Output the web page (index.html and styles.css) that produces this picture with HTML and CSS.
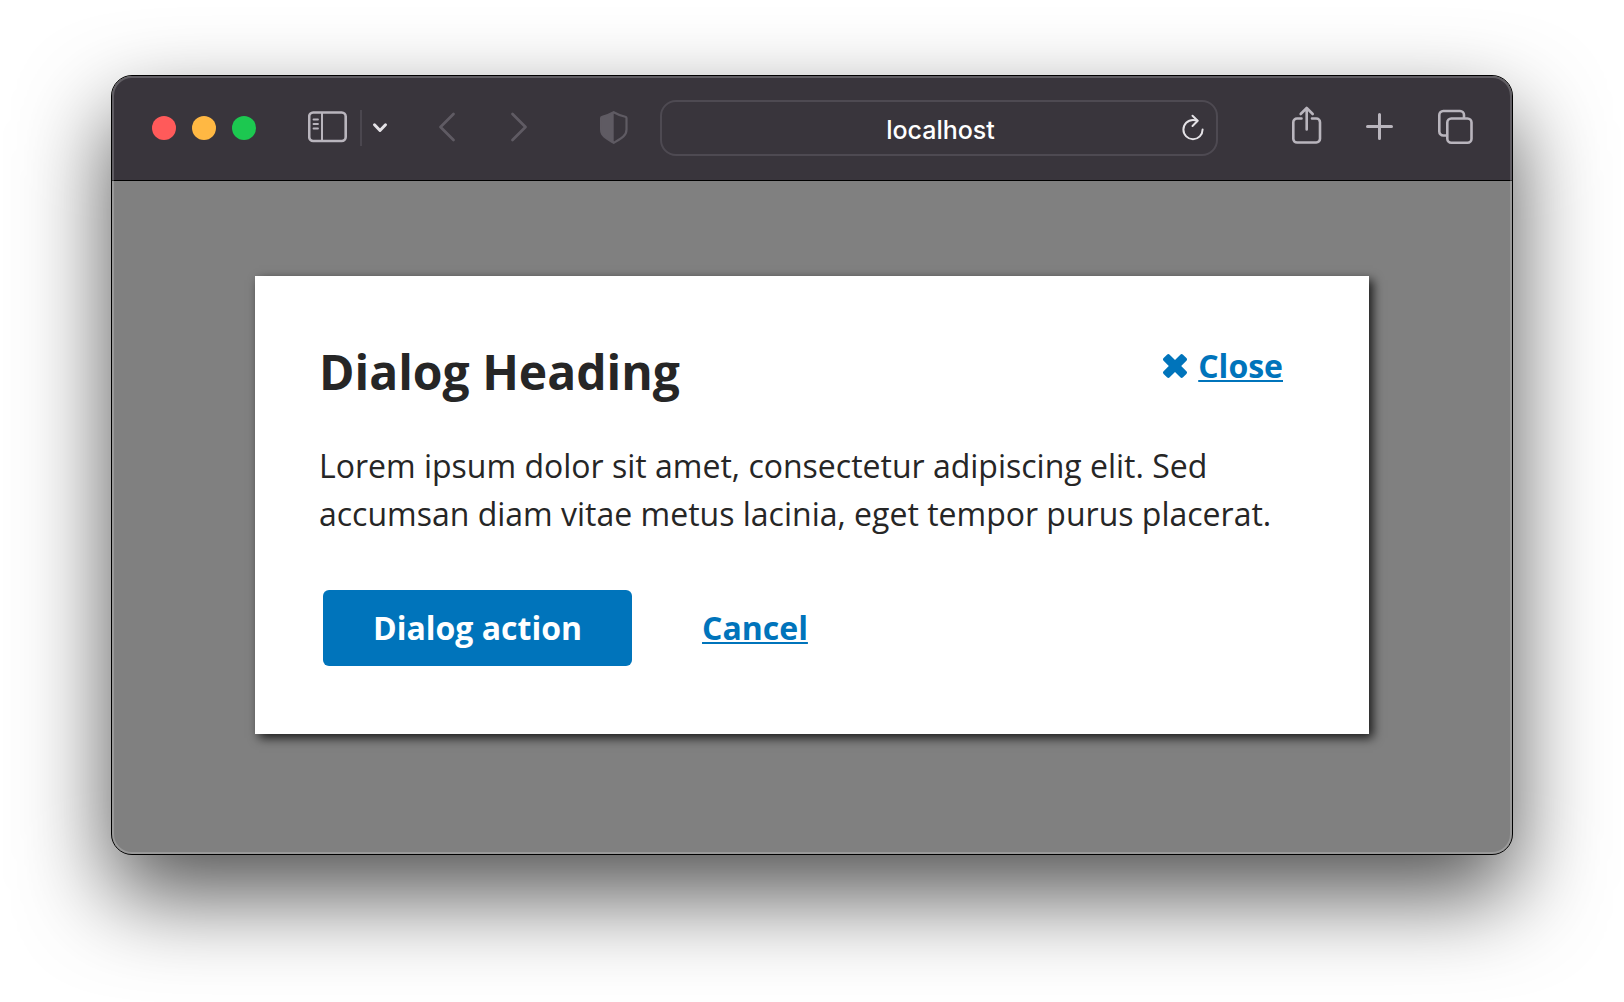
FILE: index.html
```html
<!DOCTYPE html>
<html lang="en">
<head>
<meta charset="utf-8">
<meta name="viewport" content="width=device-width, initial-scale=1">
<title>Dialog</title>
<link rel="stylesheet" href="styles.css">
</head>
<body>
<div class="window">
  <header class="toolbar">
    <div class="lights">
      <button class="light light-close" type="button" aria-label="Close window"></button>
      <button class="light light-minimize" type="button" aria-label="Minimize window"></button>
      <button class="light light-zoom" type="button" aria-label="Zoom window"></button>
    </div>
    <div class="sidebar-tools">
      <button class="tool" type="button" aria-label="Show sidebar">
        <svg width="40" height="44" viewBox="0 0 40 44" fill="none" stroke="currentColor" stroke-width="2" stroke-linecap="round">
          <rect x="1.200" y="6.500" width="36.500" height="28.500" rx="4" stroke-width="2.600"/>
          <path d="M14 7v28"/>
          <path d="M5.500 13.500h4.500M5.500 18h4.500M5.500 22.500h4.500" stroke-width="1.800"/>
        </svg>
      </button>
      <span class="divider"></span>
      <button class="tool tool-bright" type="button" aria-label="Tab groups">
        <svg width="16" height="44" viewBox="0 0 16 44" fill="none" stroke="currentColor" stroke-width="3" stroke-linecap="round" stroke-linejoin="round">
          <path d="M2.500 18.800l5.500 5.700 5.500-5.700"/>
        </svg>
      </button>
    </div>
    <nav class="history">
      <button class="tool tool-dim" type="button" aria-label="Back">
        <svg width="18" height="44" viewBox="0 0 18 44" fill="none" stroke="currentColor" stroke-width="2.800" stroke-linecap="round" stroke-linejoin="round">
          <path d="M15.500 8L2.500 21 15.500 34"/>
        </svg>
      </button>
      <button class="tool tool-dim" type="button" aria-label="Forward">
        <svg width="18" height="44" viewBox="0 0 18 44" fill="none" stroke="currentColor" stroke-width="2.800" stroke-linecap="round" stroke-linejoin="round">
          <path d="M2.500 8L15.500 21 2.500 34"/>
        </svg>
      </button>
    </nav>
    <div class="location">
      <button class="tool tool-dim" type="button" aria-label="Privacy report">
        <svg width="28" height="44" viewBox="0 0 28 44" fill="none" stroke="currentColor" stroke-width="2.200" stroke-linejoin="round">
          <path d="M13.700 6.200c3.600 2.100 7 3.500 11.600 4.500.8.200 1.200.7 1.200 1.400v11.400c0 6.500-5.500 9-12.800 13.300C6.400 32.500 1.100 30 1.100 23.500V12.100c0-.7.4-1.200 1.200-1.400 4.600-1 7.800-2.400 11.400-4.500z"/>
          <path d="M13.700 6.200v30.600C6.400 32.500 1.100 30 1.100 23.500V12.100c0-.7.4-1.200 1.200-1.400 4.600-1 7.800-2.400 11.400-4.500z" fill="currentColor" stroke="none"/>
        </svg>
      </button>
      <div class="address">
        <input class="address-input" type="text" value="localhost" aria-label="Address">
        <button class="tool tool-bright" type="button" aria-label="Reload">
          <svg width="24" height="44" viewBox="0 0 24 44" fill="none" stroke="currentColor" stroke-width="2" stroke-linecap="round" stroke-linejoin="round">
            <path d="M21.600 23.600a9.600 9.600 0 1 1-9.600-9.600c1.600 0 3 .2 4.300.7"/>
            <path d="M11.500 9.800l5.200 5-5.200 5.200"/>
          </svg>
        </button>
      </div>
    </div>
    <div class="actions">
      <button class="tool" type="button" aria-label="Share">
        <svg width="30" height="44" viewBox="0 0 30 44" fill="none" stroke="currentColor" stroke-width="2.600" stroke-linecap="round" stroke-linejoin="round">
          <path d="M9.500 12.500H5a3.700 3.700 0 0 0-3.700 3.700V33A3.700 3.700 0 0 0 5 36.500h19.300a3.700 3.700 0 0 0 3.700-3.700V16.200a3.700 3.700 0 0 0-3.700-3.700H20"/>
          <path d="M14.700 23.500V2.500M8.700 8l6-6 6 6"/>
        </svg>
      </button>
      <button class="tool" type="button" aria-label="New tab">
        <svg width="28" height="44" viewBox="0 0 28 44" fill="none" stroke="currentColor" stroke-width="3" stroke-linecap="round">
          <path d="M13.500 8.500v24M1.500 20.500h24"/>
        </svg>
      </button>
      <button class="tool" type="button" aria-label="Tab overview">
        <svg width="36" height="44" viewBox="0 0 36 44" fill="none" stroke="currentColor" stroke-width="2.600">
          <rect x="9.300" y="12.500" width="24.200" height="24.200" rx="4"/>
          <path d="M9 29.500H5.300a4 4 0 0 1-4-4V9a4 4 0 0 1 4-4H22a4 4 0 0 1 4 4v3"/>
        </svg>
      </button>
    </div>
  </header>
  <main class="viewport">
    <section class="dialog" role="dialog" aria-labelledby="dialog-title">
      <div class="dialog-header">
        <h1 class="dialog-title" id="dialog-title">Dialog Heading</h1>
        <button class="dialog-close" type="button">
          <svg width="24" height="24" viewBox="0 0 24 24" fill="currentColor" aria-hidden="true">
            <path d="M.6 6.800a2 2 0 0 1 0-2.700L4 .7a2 2 0 0 1 2.700 0L12 6l5.300-5.300a2 2 0 0 1 2.700 0l3.400 3.400a2 2 0 0 1 0 2.700L18.200 12l5.200 5.200a2 2 0 0 1 0 2.700L20 23.300a2 2 0 0 1-2.700 0L12 18l-5.300 5.300a2 2 0 0 1-2.700 0L.6 19.900a2 2 0 0 1 0-2.700L5.800 12z"/>
          </svg>
          <span class="link-text">Close</span>
        </button>
      </div>
      <p class="dialog-text">Lorem ipsum dolor sit amet, consectetur adipiscing elit. Sed accumsan diam vitae metus lacinia, eget tempor purus placerat.</p>
      <div class="dialog-actions">
        <button class="primary" type="button">Dialog action</button>
        <button class="cancel link-text" type="button">Cancel</button>
      </div>
    </section>
  </main>
</div>
</body>
</html>
```
FILE: styles.css
```css
* {
  box-sizing: border-box;
}

body {
  margin: 0;
  padding: 75px 111px 147px;
  background: #fff;
  color: #262626;
  font-family: "Open Sans", sans-serif;
  font-size: 32px;
  line-height: 48px;
}

button {
  padding: 0;
  border: 0;
  background: none;
  color: inherit;
  font: inherit;
}

.window {
  position: relative;
  border: 1px solid #000;
  border-radius: 21px;
  background: #808080;
  box-shadow: 0 40px 90px rgba(0, 0, 0, 0.68);
}

/* light rim just inside the window edge */
.window::after {
  content: "";
  position: absolute;
  inset: 0;
  border: 2px solid rgba(255, 255, 255, 0.2);
  border-radius: 20px;
  pointer-events: none;
}

.toolbar {
  display: flex;
  align-items: center;
  height: 105px;
  padding: 0 38px 0 40px;
  border-bottom: 1px solid #000;
  border-radius: 20px 20px 0 0;
  background: #39353c;
}

.lights {
  display: flex;
  gap: 16px;
  margin-right: 52px;
}

.light {
  width: 24px;
  height: 24px;
  border-radius: 50%;
}

.light-close {
  background: #ff5a5a;
}

.light-minimize {
  background: #ffb843;
}

.light-zoom {
  background: #1cc850;
}

.tool {
  display: flex;
  flex: none;
  color: #b9b5bd;
}

.tool-bright {
  color: #e4e2e6;
}

.tool-dim {
  color: #5f5b63;
}

.sidebar-tools {
  display: flex;
  align-items: center;
  margin-right: 50px;
}

.divider {
  width: 2px;
  height: 36px;
  margin: 0 10px 0 12px;
  background: #4b474f;
}

.history {
  display: flex;
  gap: 54px;
  margin-right: 72px;
}

.location {
  display: flex;
  flex: 1;
  align-items: center;
  gap: 32px;
  min-width: 0;
}

.address {
  display: flex;
  flex: 1;
  align-items: center;
  min-width: 0;
  height: 56px;
  padding: 0 11px 0 38px;
  border: 2px solid #4e4a52;
  border-radius: 16px;
}

.address-input {
  flex: 1;
  min-width: 0;
  padding: 4px 0 0;
  border: 0;
  outline: 0;
  background: none;
  color: #fff;
  font: 500 25px/32px Inter, sans-serif;
  text-align: center;
}

.actions {
  display: flex;
  gap: 44px;
  margin-left: 74px;
}

.viewport {
  padding: 95px 143px 120px;
}

.dialog {
  padding: 64px 64px 68px;
  background: #fff;
  box-shadow: 4px 4px 10px rgba(0, 0, 0, 0.8);
}

.dialog-header {
  display: flex;
  align-items: flex-start;
  justify-content: space-between;
}

.dialog-title {
  margin: 0;
  font-size: 48px;
  font-weight: 700;
  line-height: 64px;
}

.dialog-close {
  display: flex;
  align-items: center;
  gap: 11px;
  margin-right: 22px;
  padding-top: 2px;
  color: #0074bb;
  font-weight: 700;
}

.link-text {
  text-decoration: underline;
  text-decoration-thickness: 2px;
  text-underline-offset: 2px;
}

.dialog-text {
  margin: 38px 0 52px;
}

.dialog-actions {
  display: flex;
  align-items: center;
  gap: 70px;
  padding-left: 4px;
  font-weight: 700;
}

.primary {
  padding: 14px 50px;
  border-radius: 6px;
  background: #0074bb;
  color: #fff;
}

.cancel {
  color: #0074bb;
}
```
